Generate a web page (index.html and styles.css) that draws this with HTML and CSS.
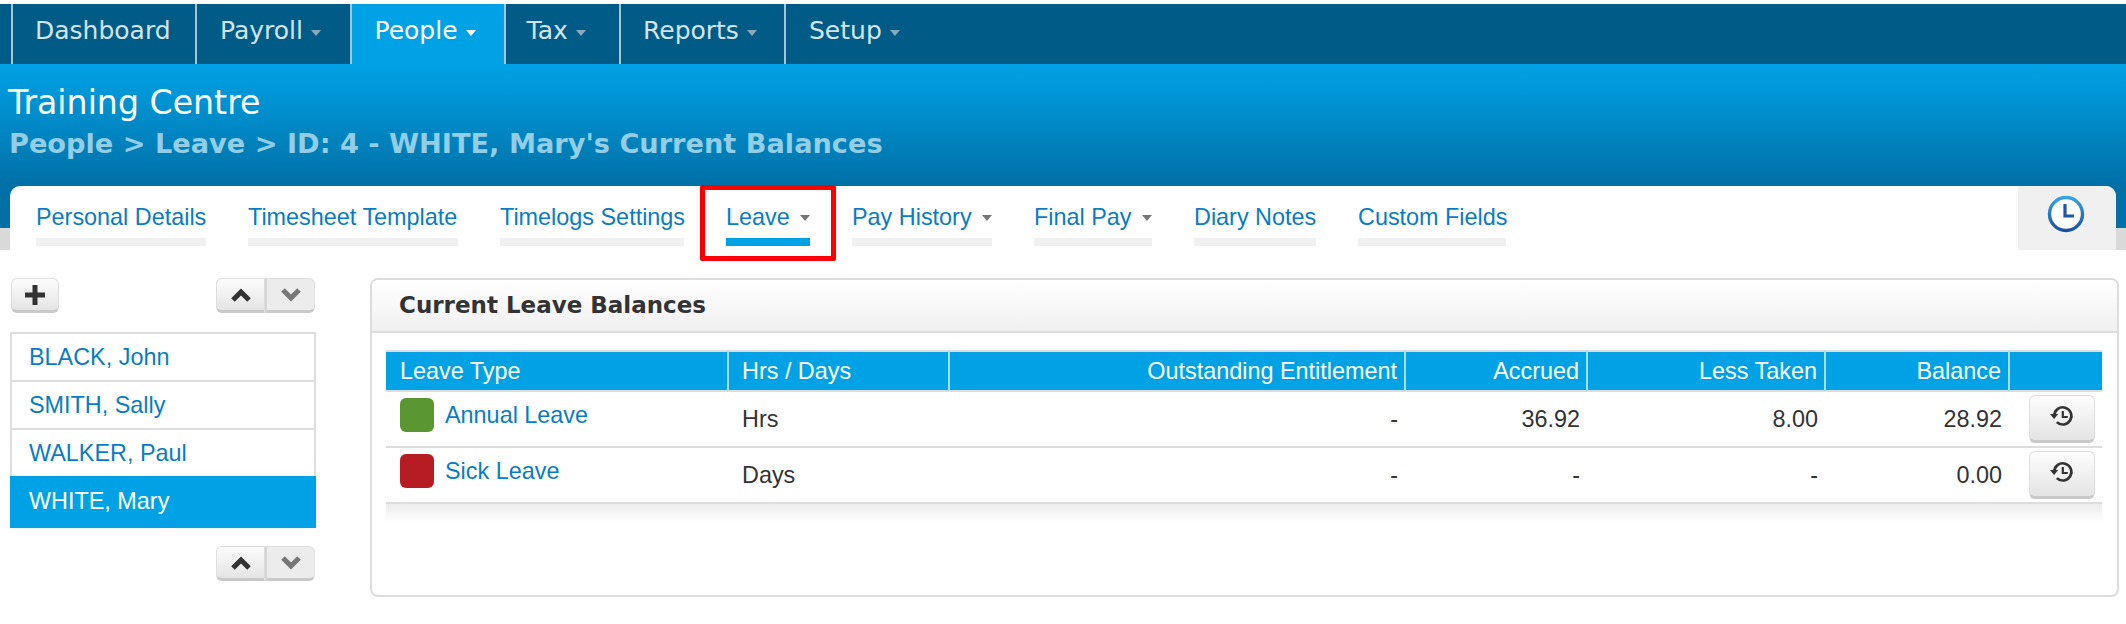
FILE: index.html
```html
<!DOCTYPE html>
<html lang="en">
<head>
<meta charset="utf-8">
<title>Current Balances</title>
<link rel="stylesheet" href="styles.css">
</head>
<body>
<nav class="topnav">
  <a class="nav-item nav-first">Dashboard</a>
  <a class="nav-item nav-w-payroll">Payroll <i class="caret"></i></a>
  <a class="nav-item nav-active nav-w-people">People <i class="caret"></i></a>
  <a class="nav-item nav-w-tax">Tax <i class="caret"></i></a>
  <a class="nav-item nav-w-reports">Reports <i class="caret"></i></a>
  <a class="nav-item nav-w-setup">Setup <i class="caret"></i></a>
</nav>
<header class="hero">
  <h1 class="hero-title">Training Centre</h1>
  <h2 class="hero-sub">People &gt; Leave &gt; ID: 4 - WHITE, Mary's Current Balances</h2>
  <div class="tabbar">
    <ul class="tabs">
      <li class="tab tab-1">Personal Details</li>
      <li class="tab tab-2">Timesheet Template</li>
      <li class="tab tab-3">Timelogs Settings</li>
      <li class="tab tab-4 tab-active">Leave <i class="caret caret-grey"></i></li>
      <li class="tab tab-5">Pay History <i class="caret caret-grey"></i></li>
      <li class="tab tab-6">Final Pay <i class="caret caret-grey"></i></li>
      <li class="tab tab-7">Diary Notes</li>
      <li class="tab tab-8">Custom Fields</li>
    </ul>
    <div class="clock-box">
      <svg class="clock" viewBox="0 0 38 38" width="38" height="38" aria-hidden="true">
        <defs><linearGradient id="cg" x1="0" y1="0" x2="0" y2="1"><stop offset="0" stop-color="#36a4e6"/><stop offset="1" stop-color="#1c4f9c"/></linearGradient></defs>
        <circle cx="19" cy="19" r="16.5" fill="#fff" stroke="url(#cg)" stroke-width="3.4"/>
        <path d="M18 9v12h9" fill="none" stroke="#1f56a8" stroke-width="3.2"/>
      </svg>
    </div>
    <div class="redbox"></div>
  </div>
</header>
<main class="content">
  <aside class="side">
    <div class="toolbar">
      <button class="btn btn-plus" type="button" aria-label="Add">
        <svg viewBox="0 0 20 20" width="20" height="20"><path d="M7.5 0h5v7.5H20v5h-7.5V20h-5v-7.5H0v-5h7.5z" fill="#333"/></svg>
      </button>
      <div class="btn-group">
        <button class="btn btn-half" type="button" aria-label="Up"><svg viewBox="0 0 20 14" width="20" height="14"><path d="M2 12l8-8 8 8" fill="none" stroke="#333" stroke-width="5"/></svg></button>
        <button class="btn btn-half btn-off" type="button" aria-label="Down"><svg viewBox="0 0 20 14" width="20" height="14"><path d="M2 2l8 8 8-8" fill="none" stroke="#777" stroke-width="5"/></svg></button>
      </div>
    </div>
    <ul class="people">
      <li class="person">BLACK, John</li>
      <li class="person">SMITH, Sally</li>
      <li class="person">WALKER, Paul</li>
      <li class="person person-active">WHITE, Mary</li>
    </ul>
    <div class="toolbar toolbar-end">
      <div class="btn-group">
        <button class="btn btn-half" type="button" aria-label="Up"><svg viewBox="0 0 20 14" width="20" height="14"><path d="M2 12l8-8 8 8" fill="none" stroke="#333" stroke-width="5"/></svg></button>
        <button class="btn btn-half btn-off" type="button" aria-label="Down"><svg viewBox="0 0 20 14" width="20" height="14"><path d="M2 2l8 8 8-8" fill="none" stroke="#777" stroke-width="5"/></svg></button>
      </div>
    </div>
  </aside>
  <section class="panel">
    <h3 class="panel-head">Current Leave Balances</h3>
    <div class="panel-body">
      <table class="grid">
        <colgroup>
          <col class="c1"><col class="c2"><col class="c3"><col class="c4"><col class="c5"><col class="c6"><col class="c7">
        </colgroup>
        <thead>
          <tr><th>Leave Type</th><th>Hrs / Days</th><th class="num">Outstanding Entitlement</th><th class="num">Accrued</th><th class="num">Less Taken</th><th class="num">Balance</th><th></th></tr>
        </thead>
        <tbody>
          <tr>
            <td class="type"><span class="swatch swatch-green"></span><a class="type-link">Annual Leave</a></td>
            <td class="lower">Hrs</td><td class="num lower">-</td><td class="num lower">36.92</td><td class="num lower">8.00</td><td class="num lower">28.92</td>
            <td class="act"><button class="btn btn-hist" type="button" aria-label="History"><svg viewBox="0 0 24 24" width="24" height="24"><path d="M4.2 11.5a8.6 8.6 0 1 1 2.6 6.6" fill="none" stroke="#333" stroke-width="2.6"/><path d="M0 10h8.2l-4.1 5z" fill="#333"/><path d="M12.8 7v6h5" fill="none" stroke="#333" stroke-width="2.2"/></svg></button></td>
          </tr>
          <tr>
            <td class="type"><span class="swatch swatch-red"></span><a class="type-link">Sick Leave</a></td>
            <td class="lower">Days</td><td class="num lower">-</td><td class="num lower">-</td><td class="num lower">-</td><td class="num lower">0.00</td>
            <td class="act"><button class="btn btn-hist" type="button" aria-label="History"><svg viewBox="0 0 24 24" width="24" height="24"><path d="M4.2 11.5a8.6 8.6 0 1 1 2.6 6.6" fill="none" stroke="#333" stroke-width="2.6"/><path d="M0 10h8.2l-4.1 5z" fill="#333"/><path d="M12.8 7v6h5" fill="none" stroke="#333" stroke-width="2.2"/></svg></button></td>
          </tr>
        </tbody>
      </table>
      <div class="grid-shadow"></div>
    </div>
  </section>
</main>
</body>
</html>
```

FILE: styles.css
```css
* { box-sizing: border-box; }
html, body { margin: 0; padding: 0; background: #fff; }
body { width: 2126px; height: 624px; overflow: hidden; font-family: "Liberation Sans", Arial, sans-serif; font-size: 23.4px; color: #333; }
ul { list-style: none; margin: 0; padding: 0; }
h1, h2, h3 { margin: 0; }

.topnav { display: flex; height: 60px; margin-top: 4px; padding-left: 11px; background: #005b87; font-family: "DejaVu Sans", sans-serif; font-size: 25px; color: #d3e4ec; }
.nav-item { display: flex; align-items: center; gap: 8px; height: 60px; border-left: 2px solid #a9c4d2; padding: 0 0 8px 23px; white-space: nowrap; }
.nav-first { width: 184px; padding-left: 22px; }
.nav-w-payroll { width: 154.5px; }
.nav-w-people { width: 154px; }
.nav-w-tax { width: 115.5px; padding-left: 21px; }
.nav-w-reports { width: 165px; padding-left: 22px; }
.nav-w-setup { width: 122px; }
.nav-active { background: #00a2e6; color: #fff; }
.caret { display: inline-block; width: 0; height: 0; margin-top: 6px; border: 5.5px solid transparent; border-top: 6px solid #8aa9b9; border-bottom: 0; }
.nav-active .caret { border-top-color: #fff; }
.caret-grey { border-top-color: #777; margin-left: 2px; }

.hero { height: 186px; padding-top: 20px; background: linear-gradient(#00a2e6, #0070a6 122px, #0070a6) 0 0 / 100% 164px no-repeat, #d9d9d9; }
.hero-title { padding-left: 8px; font: 400 33.2px/38px "DejaVu Sans", sans-serif; color: #fff; }
.hero-sub { padding-left: 9px; margin-top: 5px; font: 700 27.2px/34px "DejaVu Sans", sans-serif; color: #93cde6; }
.tabbar { position: relative; display: flex; justify-content: space-between; height: 64px; margin: 25px 10px 0; border-radius: 10px 10px 0 0; background: #fff; }
.tabs { display: flex; gap: 42px; padding: 14px 0 0 26px; color: #0a7cc4; }
.tab { display: flex; justify-content: space-between; align-items: flex-start; height: 46px; border-bottom: 8px solid #f0f0f0; line-height: 34px; white-space: nowrap; }
.tab .caret { margin-top: 15px; }
.tab-1 { width: 170px; }
.tab-2 { width: 210px; }
.tab-3 { width: 184px; }
.tab-4 { width: 84px; }
.tab-5 { width: 140px; }
.tab-6 { width: 118px; }
.tab-7 { width: 122px; }
.tab-8 { width: 148px; }
.tab-active { border-bottom-color: #00a2e6; }
.clock-box { display: flex; justify-content: center; align-items: flex-start; width: 98px; padding: 9px 2px 0 0; background: #f0f0f0; border-top-right-radius: 10px; }
.clock { display: block; }
.redbox { position: absolute; left: 690px; top: -1px; width: 136px; height: 76px; border: 5px solid #f00; border-radius: 2px; }

.content { display: flex; gap: 54px; padding: 28px 7px 0 10px; }
.side { width: 306px; flex: none; }
.toolbar { display: flex; justify-content: space-between; padding: 0 1px; height: 35px; }
.toolbar-end { justify-content: flex-end; margin-top: 18px; }
.btn { display: flex; align-items: center; justify-content: center; padding: 0; border: 1.5px solid #dedede; border-bottom: 3px solid #c9c9c9; border-radius: 6px; background: linear-gradient(#fdfdfd, #e4e4e4); }
.btn-plus { width: 48px; height: 35px; }
.btn-group { display: flex; width: 99px; height: 35px; }
.btn-half { width: 49px; height: 35px; border-radius: 6px 0 0 6px; }
.btn-half + .btn-half { width: 50px; border-left: 2px solid #d4d4d4; border-radius: 0 6px 6px 0; }
.btn-off { background: #ececec; }
.people { margin-top: 19px; border: 2px solid #ddd; border-bottom: 0; color: #0a7cc4; height: 196px; }
.person { height: 48px; padding-left: 17px; line-height: 46px; border-bottom: 2px solid #ddd; }
.person-active { height: 52px; margin: -2px -2px 0; padding-left: 19px; padding-top: 2px; background: #00a2e6; border-bottom: 0; color: #fff; }

.panel { flex: 1; height: 319px; border: 2px solid #ddd; border-radius: 8px; }
.panel-head { height: 53px; padding-left: 27px; border-bottom: 2px solid #ddd; border-radius: 6px 6px 0 0; background: linear-gradient(#fff, #f0f0f0); font: 700 23px/50px "DejaVu Sans", sans-serif; color: #333; }
.panel-body { padding: 17px 15px 0 14px; }
.grid { width: 1716px; table-layout: fixed; border-collapse: separate; border-spacing: 0; }
.c1 { width: 341px; }
.c2 { width: 221px; }
.c3 { width: 456px; }
.c4 { width: 182px; }
.c5 { width: 238px; }
.c6 { width: 184px; }
.c7 { width: 94px; }
.grid th { height: 42px; padding: 0 7px 0 13px; background: #00a2e6; border-top: 2px solid #ddd; border-bottom: 2px solid #ddd; border-left: 2px solid #a8dcf3; color: #fff; font-weight: 400; font-size: 23.4px; text-align: left; white-space: nowrap; }
.grid th:first-child { border-left: 0; padding-left: 14px; }
.grid th.num, .grid td.num { text-align: right; }
.grid td { height: 56px; padding: 0 6px 0 15px; border-bottom: 2px solid #ddd; color: #333; font-size: 23.4px; }
.grid td.lower { padding-top: 1px; }
.grid td.type { padding: 0 0 8px 14px; white-space: nowrap; }
.type-link { color: #0a7cc4; vertical-align: middle; }
.swatch { display: inline-block; width: 34px; height: 34px; margin-right: 11px; border-radius: 6px; vertical-align: middle; }
.swatch-green { background: #5a9632; }
.swatch-red { background: #b71c23; }
.grid td.act { padding: 0; }
.btn-hist { width: 66px; height: 48px; margin-left: 21px; padding-bottom: 4px; }
.grid-shadow { height: 18px; background: linear-gradient(#ececec, #fff); }
```
